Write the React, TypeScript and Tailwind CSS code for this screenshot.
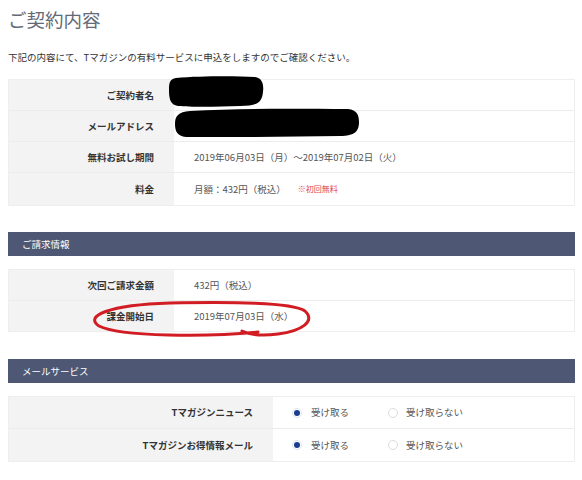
import React from 'react';

const font = { fontFamily: '"Noto Sans CJK JP", "Noto Sans", sans-serif' };

function Row({ label, children, h = 'h-[31px]', last = false }: { label: string; children?: React.ReactNode; h?: string; last?: boolean }) {
  return (
    <div className={`flex ${h} ${last ? '' : 'border-b border-[#ececec]'}`}>
      <div className="w-[165px] shrink-0 bg-[#f3f3f3] flex items-center justify-end pr-5 font-bold text-[#333]">{label}</div>
      <div className="flex-1 flex items-center pl-5 text-[#555]">{children}</div>
    </div>
  );
}

function Radio({ checked }: { checked?: boolean }) {
  return checked ? (
    <span className="w-[10px] h-[10px] rounded-full border border-[#dfe4ee] bg-white flex items-center justify-center">
      <span className="w-[6px] h-[6px] rounded-full bg-[#1c3c8c]" />
    </span>
  ) : (
    <span className="w-[10px] h-[10px] rounded-full border border-[#dcdcdc] bg-white" />
  );
}

function RadioRow({ label, last }: { label: string; last?: boolean }) {
  return (
    <div className={`flex h-[32px] ${last ? '' : 'border-b border-[#ececec]'}`}>
      <div className="w-[264px] shrink-0 bg-[#f3f3f3] flex items-center justify-end pr-5 font-bold text-[#333]">{label}</div>
      <div className="flex-1 flex items-center pl-[19px] text-[#555]">
        <div className="w-[96px] flex items-center gap-[9px]">
          <Radio checked />
          <span>受け取る</span>
        </div>
        <div className="flex items-center gap-[8px]">
          <Radio />
          <span>受け取らない</span>
        </div>
      </div>
    </div>
  );
}

function SectionHeader({ title }: { title: string }) {
  return <div className="h-[24px] bg-[#4e5874] text-white flex items-center pl-[14px]">{title}</div>;
}

export default function App() {
  return (
    <div className="relative w-[582px] h-[480px] bg-white text-[9.5px] overflow-hidden" style={font}>
      <div className="pl-2 pr-[7px]">
        <h1 className="pt-[8px] h-[40px] text-[18.5px] leading-[22px] text-[#636a77]">ご契約内容</h1>
        <p className="mt-[10px] leading-[14px] text-[#333]">下記の内容にて、Tマガジンの有料サービスに申込をしますのでご確認ください。</p>

        <div className="mt-[15px] border border-[#eeeeee]">
          <Row label="ご契約者名" />
          <Row label="メールアドレス" />
          <Row label="無料お試し期間">2019年06月03日（月）～2019年07月02日（火）</Row>
          <Row label="料金" h="h-[32px]" last>
            月額：432円（税込）
            <span className="ml-[12px] text-[8px] text-[#e0474f]">※初回無料</span>
          </Row>
        </div>

        <div className="mt-[26px]">
          <SectionHeader title="ご請求情報" />
        </div>
        <div className="mt-[13px] border border-[#eeeeee]">
          <Row label="次回ご請求金額">432円（税込）</Row>
          <Row label="課金開始日" h="h-[30px]" last>2019年07月03日（水）</Row>
        </div>

        <div className="mt-[27px]">
          <SectionHeader title="メールサービス" />
        </div>
        <div className="mt-[13px] border border-[#eeeeee]">
          <RadioRow label="Tマガジンニュース" />
          <RadioRow label="Tマガジンお得情報メール" last />
        </div>
      </div>

      {/* redaction blobs and red marker annotation */}
      <svg className="absolute left-0 top-0 pointer-events-none" width="582" height="480" viewBox="0 0 582 480">
        <path d="M176 78 C200 76 235 76 255 77 C262 78 264 84 263 92 C262 102 258 106 240 106 C215 107 190 107 178 106 C170 105 169 98 169 90 C169 82 170 79 176 78 Z" fill="#000" />
        <path d="M190 111 C240 108 300 109 348 109 C357 110 359 115 359 122 C359 131 355 136 340 136 C290 137 230 137 186 137 C177 136 175 131 175 124 C175 116 178 112 190 111 Z" fill="#000" />
        <path d="M258 332 C210 337 120 337 99 326 C84 316 108 305 170 303 C230 302 292 302 305 311 C316 321 302 331 278 334 C262 336 250 335 242 331" fill="none" stroke="#d11c24" strokeWidth="3" strokeLinecap="round" />
      </svg>
    </div>
  );
}
